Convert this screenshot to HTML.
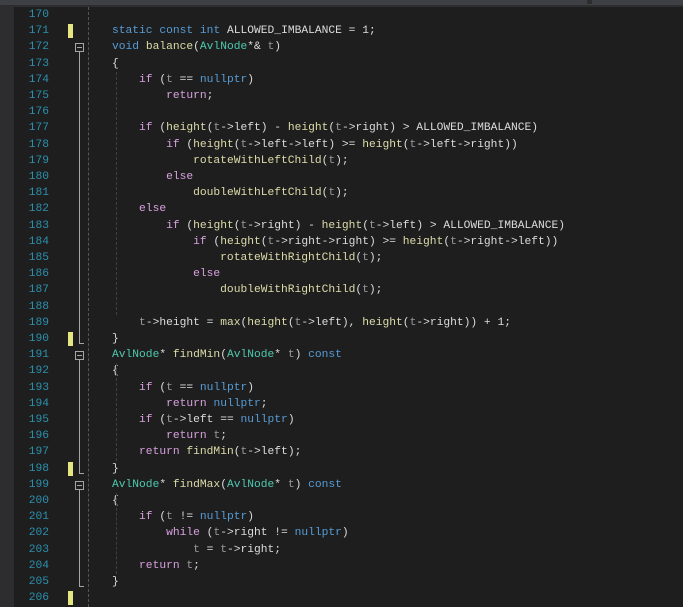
<!DOCTYPE html>
<html><head><style>
body{margin:0;width:683px;height:607px;background:#1e1e1e;overflow:hidden;position:relative;font-family:"Liberation Mono",monospace;font-size:11.27px}
.top{position:absolute;left:0;top:0;width:683px;height:5px;background:#3f3f46}
.top2{position:absolute;left:0;top:5px;width:683px;height:2px;background:#2d2d30}
.sep{position:absolute;left:587px;top:0;width:5px;height:4px;background:#2d2d30}
.left{position:absolute;left:0;top:7px;width:14px;height:600px;background:#2d2d30}
.ln{position:absolute;left:14px;width:35px;text-align:right;color:#2b91af;height:16.2px;line-height:16.2px}
.code{position:absolute;left:58px;white-space:pre;color:#dcdcdc;height:16.2px;line-height:16.2px}
.k{color:#569cd6}.c{color:#d8a0df}.f{color:#dcdcaa}.t{color:#4ec9b0}.p{color:#9a9a9a}.m{color:#dadada}
.mk{position:absolute;left:68px;width:5px;height:14px;background:#e6e681}
.fb{position:absolute;left:75px;width:7px;height:7px;border:1px solid #a5a5a5;background:#1e1e1e}
.fb:after{content:"";position:absolute;left:1px;top:3px;width:5px;height:1px;background:#a5a5a5}
.vl{position:absolute;left:79px;width:1px;background:#a5a5a5}
.tk{position:absolute;left:79px;width:5px;height:1px;background:#a5a5a5}
.dl{position:absolute;left:88px;top:7px;height:600px;border-left:1px dashed #555}
.ig{position:absolute;border-left:1px dashed #404040;width:0}
</style></head><body>
<div class="top"></div><div class="top2"></div><div class="sep"></div><div class="left"></div>
<div class="dl"></div>
<div id="c"></div>
<script>
const L=[
"",
"<span class=k>static</span> <span class=k>const</span> <span class=k>int</span> ALLOWED_IMBALANCE = 1;",
"<span class=k>void</span> <span class=f>balance</span>(<span class=t>AvlNode</span>*&amp; <span class=p>t</span>)",
"{",
"    <span class=c>if</span> (<span class=p>t</span> == <span class=k>nullptr</span>)",
"        <span class=c>return</span>;",
"",
"    <span class=c>if</span> (<span class=f>height</span>(<span class=p>t</span>-&gt;left) - <span class=f>height</span>(<span class=p>t</span>-&gt;right) &gt; ALLOWED_IMBALANCE)",
"        <span class=c>if</span> (<span class=f>height</span>(<span class=p>t</span>-&gt;left-&gt;left) &gt;= <span class=f>height</span>(<span class=p>t</span>-&gt;left-&gt;right))",
"            <span class=f>rotateWithLeftChild</span>(<span class=p>t</span>);",
"        <span class=c>else</span>",
"            <span class=f>doubleWithLeftChild</span>(<span class=p>t</span>);",
"    <span class=c>else</span>",
"        <span class=c>if</span> (<span class=f>height</span>(<span class=p>t</span>-&gt;right) - <span class=f>height</span>(<span class=p>t</span>-&gt;left) &gt; ALLOWED_IMBALANCE)",
"            <span class=c>if</span> (<span class=f>height</span>(<span class=p>t</span>-&gt;right-&gt;right) &gt;= <span class=f>height</span>(<span class=p>t</span>-&gt;right-&gt;left))",
"                <span class=f>rotateWithRightChild</span>(<span class=p>t</span>);",
"            <span class=c>else</span>",
"                <span class=f>doubleWithRightChild</span>(<span class=p>t</span>);",
"",
"    <span class=p>t</span>-&gt;height = <span class=f>max</span>(<span class=f>height</span>(<span class=p>t</span>-&gt;left), <span class=f>height</span>(<span class=p>t</span>-&gt;right)) + 1;",
"}",
"<span class=t>AvlNode</span>* <span class=f>findMin</span>(<span class=t>AvlNode</span>* <span class=p>t</span>) <span class=k>const</span>",
"{",
"    <span class=c>if</span> (<span class=p>t</span> == <span class=k>nullptr</span>)",
"        <span class=c>return</span> <span class=k>nullptr</span>;",
"    <span class=c>if</span> (<span class=p>t</span>-&gt;left == <span class=k>nullptr</span>)",
"        <span class=c>return</span> <span class=p>t</span>;",
"    <span class=c>return</span> <span class=f>findMin</span>(<span class=p>t</span>-&gt;left);",
"}",
"<span class=t>AvlNode</span>* <span class=f>findMax</span>(<span class=t>AvlNode</span>* <span class=p>t</span>) <span class=k>const</span>",
"{",
"    <span class=c>if</span> (<span class=p>t</span> != <span class=k>nullptr</span>)",
"        <span class=c>while</span> (<span class=p>t</span>-&gt;right != <span class=k>nullptr</span>)",
"            <span class=p>t</span> = <span class=p>t</span>-&gt;right;",
"    <span class=c>return</span> <span class=p>t</span>;",
"}",
""];
let h="";const T=i=>7+i*16.2;
L.forEach((s,i)=>{h+=`<div class=ln style="top:${T(i)}px">${170+i}</div><div class=code style="left:112px;top:${T(i)}px">${s}</div>`;});
[1,20,28,36].forEach(i=>h+=`<div class=mk style="top:${T(i)+1}px"></div>`);
[[2,20],[21,28],[29,35]].forEach(([a,b])=>{h+=`<div class=fb style="top:${T(a)+4}px"></div><div class=vl style="top:${T(a)+13}px;height:${T(b)+12-T(a)-13}px"></div><div class=tk style="top:${T(b)+12}px"></div>`;});
[[4,19],[22,28],[30,35]].forEach(([a,b])=>h+=`<div class=ig style="left:116px;top:${T(a)}px;height:${T(b)-T(a)}px"></div>`);
document.getElementById('c').innerHTML=h;
</script>
</body></html>
